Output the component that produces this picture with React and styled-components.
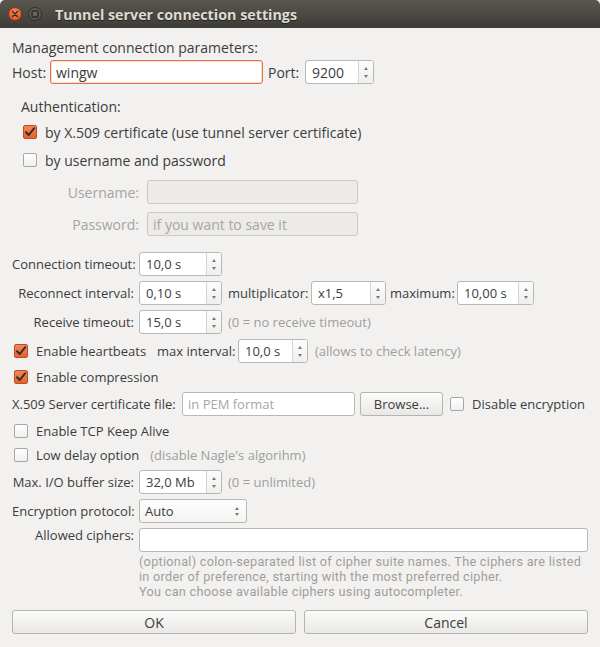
import React from "react";
import styled, { createGlobalStyle } from "styled-components";

const GlobalStyle = createGlobalStyle`
  html, body {
    margin: 0;
    padding: 0;
    background: #f2f1f0;
  }
  body {
    font-family: "Open Sans", "Noto Sans", sans-serif;
    color: #3c3c3c;
  }
`;

const Window = styled.div`
  width: 600px;
  height: 647px;
  overflow: hidden;
  background: #f2f1f0;
`;

const TitleBar = styled.div`
  height: 28px;
  display: flex;
  align-items: center;
  padding-left: 8px;
  background: linear-gradient(#58564f, #3d3c37);
  border-radius: 5px 5px 0 0;
`;

const WinBtn = styled.div`
  width: 14px;
  height: 14px;
  border-radius: 50%;
  margin-right: 6px;
  box-sizing: border-box;
  display: flex;
  align-items: center;
  justify-content: center;
  background: ${p => (p.$close ? "radial-gradient(circle at 50% 35%, #f58a5c, #de4b18)" : "radial-gradient(circle at 50% 35%, #6c6a64, #4e4c47)")};
  border: 1px solid ${p => (p.$close ? "#8a3614" : "#2f2e2b")};
`;

const Title = styled.div`
  margin-left: 7px;
  font-size: 14.3px;
  font-weight: bold;
  color: #dfdbd2;
  text-shadow: 0 1px 0 #222;
`;

const Body = styled.div`
  padding: 0 12px;
  font-size: 13px;
`;

const Heading = styled.div`
  font-size: 14px;
  line-height: 20px;
  margin-top: ${p => p.$mt || 0}px;
`;

const Row = styled.div`
  display: flex;
  align-items: center;
  height: ${p => p.$h || 24}px;
  margin-top: ${p => p.$mt || 0}px;
  padding-left: ${p => p.$pl || 0}px;
  font-size: ${p => p.$fs || 13}px;
`;

const Label = styled.div`
  width: ${p => p.$w}px;
  flex: none;
  text-align: ${p => (p.$left ? "left" : "right")};
  color: ${p => (p.$disabled ? "#a5a4a1" : "#3c3c3c")};
  margin-left: ${p => p.$ml || 0}px;
  margin-right: ${p => p.$mr || 0}px;
  white-space: nowrap;
`;

const Text = styled.span`
  color: ${p => (p.$hint ? "#a09e9b" : "#3c3c3c")};
  margin-left: ${p => p.$ml || 0}px;
  white-space: nowrap;
`;

const Input = styled.div`
  width: ${p => p.$w}px;
  height: 24px;
  box-sizing: border-box;
  flex: none;
  border: 1px solid ${p => (p.$focus ? "#e4733f" : p.$disabled ? "#cbc9c6" : "#bab8b4")};
  border-radius: 3px;
  background: ${p => (p.$disabled ? "#ecebe9" : "#fff")};
  display: flex;
  align-items: center;
  padding-left: 5px;
  font-size: ${p => p.$fs || 13}px;
  color: #3c3c3c;
  box-shadow: ${p => (p.$focus ? "inset 0 0 0 1px rgba(228,115,63,0.25)" : "none")};
`;

const Placeholder = styled.span`
  color: #a8a6a3;
`;

const SpinWrap = styled.div`
  width: ${p => p.$w}px;
  height: 24px;
  box-sizing: border-box;
  flex: none;
  display: flex;
  border: 1px solid #bab8b4;
  border-radius: 3px;
  background: #fff;
  overflow: hidden;
`;

const SpinValue = styled.div`
  flex: 1;
  display: flex;
  align-items: center;
  padding-left: 6px;
  font-size: ${p => p.$fs || 13}px;
`;

const SpinBtns = styled.div`
  width: 15px;
  flex: none;
  border-left: 1px solid #d6d4d1;
  background: linear-gradient(#fcfcfc, #f0efee);
  display: flex;
  flex-direction: column;
  justify-content: space-between;
  align-items: center;
  padding: 6px 0 5px;
  box-sizing: border-box;
`;

const Arrow = styled.div`
  width: 0;
  height: 0;
  border-left: 2.5px solid transparent;
  border-right: 2.5px solid transparent;
  ${p => (p.$down ? "border-top: 3px solid #7b7a77;" : "border-bottom: 3px solid #7b7a77;")}
`;

const Combo = styled.div`
  width: 108px;
  height: 24px;
  box-sizing: border-box;
  flex: none;
  display: flex;
  align-items: center;
  justify-content: space-between;
  padding: 0 7px 0 5px;
  border: 1px solid #bab8b4;
  border-radius: 3px;
  background: linear-gradient(#ffffff, #f4f3f2);
`;

const ComboArrows = styled.div`
  display: flex;
  flex-direction: column;
  gap: 3px;
`;

const Box = styled.div`
  width: 14px;
  height: 14px;
  flex: none;
  box-sizing: border-box;
  border-radius: 2px;
  margin-right: 8px;
  display: flex;
  align-items: center;
  justify-content: center;
  border: 1px solid ${p => (p.$checked ? "#b9501f" : "#a9a7a3")};
  background: ${p => (p.$checked ? "linear-gradient(#f3865a, #e4622d)" : "linear-gradient(#ffffff, #f0efee)")};
`;

const Button = styled.div`
  height: 24px;
  box-sizing: border-box;
  flex: ${p => (p.$grow ? 1 : "none")};
  width: ${p => (p.$w ? p.$w + "px" : "auto")};
  margin-left: ${p => p.$ml || 0}px;
  display: flex;
  align-items: center;
  justify-content: center;
  border: 1px solid #b6b4b0;
  border-radius: 3px;
  background: linear-gradient(#fbfbfa, #e9e8e6);
  font-size: ${p => p.$fs || 13}px;
  color: #3c3c3c;
`;

const Section = styled.div`
  padding-left: 9px;
`;

const CipherRow = styled.div`
  display: flex;
  align-items: flex-start;
  margin-top: 5px;
`;

const CipherLabel = styled.div`
  width: 122px;
  margin-right: 5px;
  text-align: right;
  flex: none;
  line-height: 16px;
  margin-top: -1px;
`;

const CipherCol = styled.div`
  flex: 1;
  display: flex;
  flex-direction: column;
`;

const Help = styled.div`
  margin-top: 2px;
  display: flex;
  flex-direction: column;
`;

const HelpLine = styled.div`
  height: 15px;
  font-family: Roboto, "Open Sans", sans-serif;
  font-size: 12.7px;
  letter-spacing: 0.28px;
  line-height: 15px;
  color: #a09e9b;
  white-space: nowrap;
`;

const ButtonBar = styled.div`
  display: flex;
  gap: 8px;
  margin-top: 11px;
`;

function Spin({ w, value, fs }) {
  return (
    <SpinWrap $w={w}>
      <SpinValue $fs={fs}>{value}</SpinValue>
      <SpinBtns>
        <Arrow />
        <Arrow $down />
      </SpinBtns>
    </SpinWrap>
  );
}

function Check({ checked }) {
  return (
    <Box $checked={checked}>
      {checked && (
        <svg width="12" height="12" viewBox="0 0 12 12">
          <path d="M2 6.2 L4.8 9 L10.2 2.2" fill="none" stroke="#3a2a22" strokeWidth="2" strokeLinecap="round" strokeLinejoin="round" />
        </svg>
      )}
    </Box>
  );
}

const helpLines = [
  "(optional) colon-separated list of cipher suite names. The ciphers are listed",
  "in order of preference, starting with the most preferred cipher.",
  "You can choose available ciphers using autocompleter.",
];

export default function App() {
  return (
    <Window>
      <GlobalStyle />
      <TitleBar>
        <WinBtn $close>
          <svg width="8" height="8" viewBox="0 0 8 8">
            <path d="M1.5 1.5 L6.5 6.5 M6.5 1.5 L1.5 6.5" stroke="#3b2a22" strokeWidth="1.5" strokeLinecap="round" />
          </svg>
        </WinBtn>
        <WinBtn>
          <svg width="8" height="8" viewBox="0 0 8 8">
            <rect x="1" y="1" width="6" height="6" rx="1" fill="none" stroke="#2c2b28" strokeWidth="1.4" />
          </svg>
        </WinBtn>
        <Title>Tunnel server connection settings</Title>
      </TitleBar>
      <Body>
        <Heading $mt={10}>Management connection parameters:</Heading>
        <Row $mt={2} $fs={14}>
          <Label $w={38} $left>Host:</Label>
          <Input $w={213} $focus $fs={14}>wingw</Input>
          <Label $w={37} $left $ml={5}>Port:</Label>
          <Spin w={69} value="9200" fs={14} />
        </Row>

        <Section>
          <Heading $mt={13}>Authentication:</Heading>
          <Row $h={20} $mt={5} $pl={2} $fs={14}>
            <Check checked />
            <span>by X.509 certificate (use tunnel server certificate)</span>
          </Row>
          <Row $h={20} $mt={8} $pl={2} $fs={14}>
            <Check />
            <span>by username and password</span>
          </Row>
          <Row $mt={10} $fs={14}>
            <Label $w={118} $mr={8} $disabled>Username:</Label>
            <Input $w={211} $disabled />
          </Row>
          <Row $mt={8} $fs={14}>
            <Label $w={118} $mr={8} $disabled>Password:</Label>
            <Input $w={211} $disabled $fs={14}>
              <Placeholder>if you want to save it</Placeholder>
            </Input>
          </Row>
        </Section>

        <Row $mt={16}>
          <Label $w={122} $mr={5}>Connection timeout:</Label>
          <Spin w={83} value="10,0 s" />
        </Row>
        <Row $mt={5}>
          <Label $w={122} $mr={5}>Reconnect interval:</Label>
          <Spin w={83} value="0,10 s" />
          <Label $w={83} $left $ml={6}>multiplicator:</Label>
          <Spin w={75} value="x1,5" />
          <Label $w={67} $left $ml={4}>maximum:</Label>
          <Spin w={77} value="10,00 s" />
        </Row>
        <Row $mt={5}>
          <Label $w={122} $mr={5}>Receive timeout:</Label>
          <Spin w={83} value="15,0 s" />
          <Text $hint $ml={6}>(0 = no receive timeout)</Text>
        </Row>
        <Row $mt={5} $pl={2}>
          <Check checked />
          <Label $w={121} $left>Enable heartbeats</Label>
          <Label $w={81} $left>max interval:</Label>
          <Spin w={70} value="10,0 s" />
          <Text $hint $ml={7}>(allows to check latency)</Text>
        </Row>
        <Row $h={20} $mt={4} $pl={2}>
          <Check checked />
          <span>Enable compression</span>
        </Row>
        <Row $mt={5}>
          <Label $w={170} $left>X.509 Server certificate file:</Label>
          <Input $w={173}>
            <Placeholder>in PEM format</Placeholder>
          </Input>
          <Button $w={83} $ml={5}>Browse...</Button>
          <Label $w={7} />
          <Check />
          <span>Disable encryption</span>
        </Row>
        <Row $h={20} $mt={5} $pl={2}>
          <Check />
          <span>Enable TCP Keep Alive</span>
        </Row>
        <Row $h={20} $mt={4} $pl={2}>
          <Check />
          <span>Low delay option</span>
          <Text $hint $ml={11}>(disable Nagle's algorihm)</Text>
        </Row>
        <Row $mt={5}>
          <Label $w={122} $mr={5}>Max. I/O buffer size:</Label>
          <Spin w={83} value="32,0 Mb" />
          <Text $hint $ml={6}>(0 = unlimited)</Text>
        </Row>
        <Row $mt={5}>
          <Label $w={122} $mr={5}>Encryption protocol:</Label>
          <Combo>
            <span>Auto</span>
            <ComboArrows>
              <Arrow />
              <Arrow $down />
            </ComboArrows>
          </Combo>
        </Row>
        <CipherRow>
          <CipherLabel>Allowed ciphers:</CipherLabel>
          <CipherCol>
            <Input $w={449} />
            <Help>
              {helpLines.map(line => (
                <HelpLine key={line}>{line}</HelpLine>
              ))}
            </Help>
          </CipherCol>
        </CipherRow>
        <ButtonBar>
          <Button $grow $fs={14}>OK</Button>
          <Button $grow $fs={14}>Cancel</Button>
        </ButtonBar>
      </Body>
    </Window>
  );
}
